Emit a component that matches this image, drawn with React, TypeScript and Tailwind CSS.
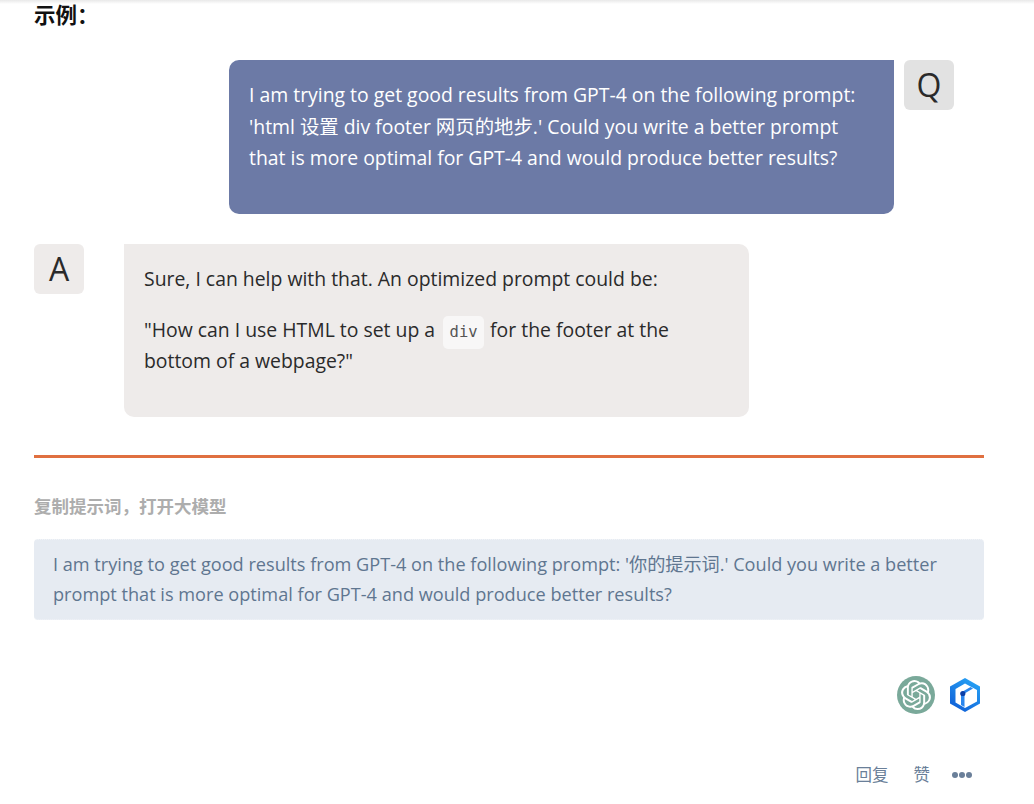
import React from "react";

const FONT = "font-['Open_Sans','Noto_Sans_CJK_SC',sans-serif]";

function OpenAiIcon() {
  return (
    <div className="w-[38px] h-[38px] rounded-full bg-[#7aa99a] flex items-center justify-center">
      <svg viewBox="0 0 24 24" className="w-[30px] h-[30px]" fill="#ffffff">
        <path d="M22.28 9.82a5.98 5.98 0 0 0-.52-4.91 6.05 6.05 0 0 0-6.51-2.9A6.07 6.07 0 0 0 4.98 4.18a5.98 5.98 0 0 0-4 2.9 6.05 6.05 0 0 0 .75 7.1 5.98 5.98 0 0 0 .51 4.91 6.05 6.05 0 0 0 6.51 2.9A5.98 5.98 0 0 0 13.26 24a6.06 6.06 0 0 0 5.77-4.21 5.99 5.99 0 0 0 4-2.9 6.06 6.06 0 0 0-.75-7.07zM13.26 22.43a4.48 4.48 0 0 1-2.88-1.04l.14-.08 4.78-2.76a.79.79 0 0 0 .39-.68v-6.74l2.02 1.17a.07.07 0 0 1 .04.05v5.58a4.5 4.5 0 0 1-4.49 4.5zM3.6 18.3a4.47 4.47 0 0 1-.54-3.01l.14.09 4.78 2.76a.77.77 0 0 0 .78 0l5.84-3.37v2.33a.08.08 0 0 1-.03.06l-4.83 2.79a4.5 4.5 0 0 1-6.14-1.65zM2.34 7.9a4.49 4.49 0 0 1 2.37-1.97v5.68a.77.77 0 0 0 .39.68l5.81 3.35-2.02 1.17a.08.08 0 0 1-.07 0L3.99 14a4.5 4.5 0 0 1-1.65-6.1zm16.6 3.86-5.84-3.39 2.02-1.16a.08.08 0 0 1 .07 0l4.83 2.79a4.49 4.49 0 0 1-.68 8.1v-5.68a.79.79 0 0 0-.4-.66zm2.01-3.02-.14-.09-4.77-2.78a.78.78 0 0 0-.79 0L9.41 9.23V6.9a.07.07 0 0 1 .03-.06l4.83-2.79a4.5 4.5 0 0 1 6.68 4.66zM8.31 12.86 6.29 11.7a.08.08 0 0 1-.04-.06V6.07a4.5 4.5 0 0 1 7.37-3.45l-.14.08-4.78 2.76a.79.79 0 0 0-.39.68zm1.1-2.37 2.6-1.5 2.61 1.5v3l-2.6 1.5-2.6-1.5z" />
      </svg>
    </div>
  );
}

function CubeIcon() {
  return (
    <svg viewBox="0 0 30 34" className="w-[30px] h-[34px]">
      <defs>
        <linearGradient id="cube" x1="0.8" y1="0" x2="0.2" y2="1">
          <stop offset="0" stopColor="#27a4f6" />
          <stop offset="1" stopColor="#0f5ed6" />
        </linearGradient>
      </defs>
      <path d="M15 0 30 8.500v17L15 34 0 25.500v-17z" fill="url(#cube)" />
      <path d="M15 5.500 27 12v11.500L15 30 5.500 24.500V11z" fill="#ffffff" />
      <path d="M14.500 15.500 23 10.500l-2.500-1.500L11 14.500V27l3.500 2z" fill="#2a86ee" />
      <circle cx="12.800" cy="15.500" r="2.600" fill="#0b3fa8" />
    </svg>
  );
}

export default function App() {
  return (
    <div className={`${FONT} relative w-[1034px] h-[804px] overflow-hidden bg-white`}>
      <div className="absolute top-0 left-0 right-0 h-[4px] bg-gradient-to-b from-[#e9e9e9] to-white" />
      <div className="px-[34px] w-[1018px]">
        <h3 className="h-[60px] pt-[2px] text-[21.500px] leading-[26px] font-bold text-[#111111]">示例：</h3>

        <div className="flex justify-end">
          <div className="w-[665px] h-[154px] bg-[#6c7aa6] rounded-tl-[10px] rounded-bl-[10px] rounded-br-[10px] px-[20px] pt-[19px] text-[19.400px] leading-[31.500px] text-white">
            I am trying to get good results from GPT-4 on the following prompt: 'html 设置 div footer 网页的地步.' Could you write a better prompt that is more optimal for GPT-4 and would produce better results?
          </div>
          <div className="ml-[10px] mr-[30px] w-[50px] h-[50px] rounded-[6px] bg-[#e2e2e2] flex items-center justify-center text-[32px] text-[#2a2a2a]">
            Q
          </div>
        </div>

        <div className="flex mt-[30px]">
          <div className="w-[50px] h-[50px] rounded-[6px] bg-[#eeebea] flex items-center justify-center text-[32px] text-[#2a2a2a]">
            A
          </div>
          <div className="ml-[40px] w-[625px] h-[173px] bg-[#eeebea] rounded-tr-[10px] rounded-br-[10px] rounded-bl-[10px] px-[20px] pt-[19px] text-[19.400px] leading-[31px] text-[#2a2a2a]">
            <p>Sure, I can help with that. An optimized prompt could be:</p>
            <p className="mt-[20px]">
              "How can I use HTML to set up a
              <code className="inline-block h-[33px] -my-[4px] ml-[8px] mr-[6px] px-[6.500px] font-['DejaVu_Sans_Mono',monospace] text-[15.500px] leading-[33px] text-[#555555] bg-[#f8f7f7] rounded-[5px]">div</code>
              for the footer at the bottom of a webpage?"
            </p>
          </div>
        </div>

        <div className="mt-[38px] w-[950px] h-[3px] bg-[#e07040]" />

        <div className="mt-[36px] text-[17.500px] leading-[24px] font-bold text-[#adadad]">复制提示词，打开大模型</div>

        <div className="mt-[21px] w-[950px] h-[81px] rounded-[4px] bg-[#e6ebf2] border-y border-dotted border-[#f1f4f8] px-[19px] pt-[9px] text-[18.150px] leading-[30px] text-[#5f7690]">
          I am trying to get good results from GPT-4 on the following prompt: '你的提示词.' Could you write a better prompt that is more optimal for GPT-4 and would produce better results?
        </div>

        <div className="mt-[56px] w-[950px] flex justify-end items-center gap-[15px] pr-[4px]">
          <OpenAiIcon />
          <CubeIcon />
        </div>

        <div className="mt-[50px] w-[938px] flex justify-end items-center text-[16.500px] leading-[22px] text-[#6a7f99]">
          <span>回复</span>
          <span className="ml-[25px]">赞</span>
          <span className="ml-[22px] flex gap-[1px]">
            <i className="w-[6px] h-[6px] rounded-full bg-[#6a7f99]" />
            <i className="w-[6px] h-[6px] rounded-full bg-[#6a7f99]" />
            <i className="w-[6px] h-[6px] rounded-full bg-[#6a7f99]" />
          </span>
        </div>
      </div>
    </div>
  );
}
